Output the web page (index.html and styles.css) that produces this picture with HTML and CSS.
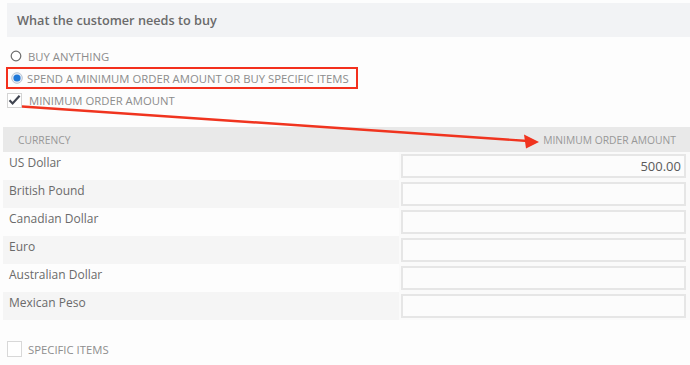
FILE: index.html
```html
<!DOCTYPE html>
<html>
<head>
<meta charset="utf-8">
<link rel="stylesheet" href="styles.css">
</head>
<body>
<div class="page">
  <div class="section-head">What the customer needs to buy</div>
  <div class="options">
    <div class="opt opt-first">
      <svg class="radio" width="12" height="12" viewBox="0 0 12 12"><circle cx="6" cy="6" r="4.8" fill="#fff" stroke="#6d6d6d" stroke-width="1.2"/></svg>
      <span>BUY ANYTHING</span>
    </div>
    <div class="opt opt-highlight">
      <svg class="radio" width="12" height="12" viewBox="0 0 12 12"><circle cx="6" cy="6" r="5.3" fill="#e8eef6" stroke="#b8c4d2" stroke-width="1"/><circle cx="6" cy="6" r="3.6" fill="#1f78d8"/></svg>
      <span>SPEND A MINIMUM ORDER AMOUNT OR BUY SPECIFIC ITEMS</span>
    </div>
    <div class="opt opt-check">
      <svg class="check" width="15" height="15" viewBox="0 0 15 15"><rect x="0.5" y="0.5" width="14" height="14" fill="#fff" stroke="#d4d4d4"/><path d="M2.5 7.2 L5.6 10.4 L12.6 2.8" fill="none" stroke="#3f4450" stroke-width="2.2" stroke-linejoin="miter"/></svg>
      <span>MINIMUM ORDER AMOUNT</span>
    </div>
  </div>

  <div class="table">
    <div class="thead">
      <span>CURRENCY</span>
      <span>MINIMUM ORDER AMOUNT</span>
    </div>
    <div class="row odd"><div class="label">US Dollar</div><div class="field"><div class="input">500.00</div></div></div>
    <div class="row even"><div class="label">British Pound</div><div class="field"><div class="input"></div></div></div>
    <div class="row odd"><div class="label">Canadian Dollar</div><div class="field"><div class="input"></div></div></div>
    <div class="row even"><div class="label">Euro</div><div class="field"><div class="input"></div></div></div>
    <div class="row odd"><div class="label">Australian Dollar</div><div class="field"><div class="input"></div></div></div>
    <div class="row even"><div class="label">Mexican Peso</div><div class="field"><div class="input"></div></div></div>
  </div>

  <div class="opt opt-specific">
    <span class="box"></span>
    <span>SPECIFIC ITEMS</span>
  </div>
</div>
<svg class="annotation" width="690" height="365" viewBox="0 0 690 365">
  <line x1="22" y1="106.5" x2="528" y2="141" stroke="#f0341f" stroke-width="2.4"/>
  <polygon points="539,142 524,134.5 526,148.5" fill="#f0341f"/>
</svg>
</body>
</html>
```
FILE: styles.css
```css
html, body {
  margin: 0;
  padding: 0;
}
body {
  background: #fdfdfd;
  font-family: "Open Sans", "Noto Sans", sans-serif;
  width: 690px;
  height: 365px;
  overflow: hidden;
  position: relative;
}
.page {
  padding-top: 3px;
}
.section-head {
  margin-left: 7px;
  height: 34px;
  line-height: 34px;
  background: #f2f3f5;
  padding-left: 10px;
  font-size: 12.7px;
  font-weight: 600;
  color: #6a6a6a;
}
.options {
  margin-top: 8px;
}
.opt {
  display: flex;
  align-items: center;
  height: 22px;
  font-size: 11.3px;
  color: #8c8c8c;
}
.opt-first {
  padding-left: 10px;
}
.opt-first .radio {
  margin-right: 6px;
}
.opt-highlight {
  box-sizing: border-box;
  margin-left: 6px;
  width: 352px;
  border: 2px solid #f3301d;
  padding-left: 3px;
}
.opt-highlight .radio {
  margin-right: 4px;
}
.opt-check {
  padding-left: 7px;
}
.opt-check .check {
  margin-right: 7px;
}
.table {
  margin-top: 16px;
  margin-left: 3px;
}
.thead {
  height: 25px;
  background: #e9e9e9;
  display: flex;
  align-items: center;
  justify-content: space-between;
  padding: 0 14px 0 15px;
  font-size: 10.3px;
  color: #989898;
}
.row {
  display: grid;
  grid-template-columns: 396px 1fr;
  height: 28px;
}
.row.odd {
  background: #fdfdfd;
}
.row.even {
  background: #f5f5f5;
}
.label {
  padding-left: 6px;
  font-size: 12px;
  line-height: 22px;
  color: #6a6a6a;
}
.field {
  height: 28px;
  display: flex;
  align-items: center;
  padding: 0 4px 0 2px;
  background: #fafafa;
}
.input {
  box-sizing: border-box;
  flex: 1;
  height: 24px;
  border: 2px solid #e6e6e6;
  background: #fcfcfc;
  text-align: right;
  padding-right: 3px;
  font-size: 13px;
  line-height: 20px;
  color: #5a5a5a;
}
.opt-specific {
  margin-top: 18px;
  padding-left: 7px;
  color: #8e8e8e;
}
.opt-specific .box {
  box-sizing: border-box;
  width: 15px;
  height: 16px;
  border: 1px solid #d8d8d8;
  background: #fff;
  margin-right: 6px;
}
.annotation {
  position: absolute;
  left: 0;
  top: 0;
  pointer-events: none;
}
```
